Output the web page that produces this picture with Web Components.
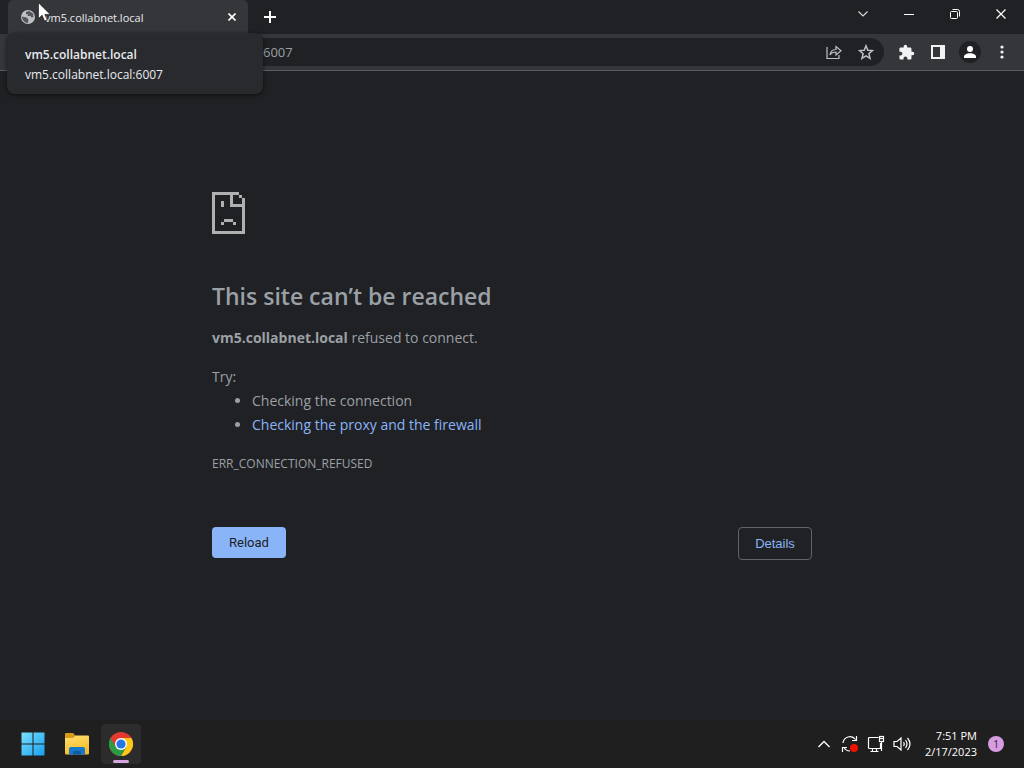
<!DOCTYPE html>
<html lang="en">
<head>
<meta charset="utf-8">
<meta name="viewport" content="width=device-width, initial-scale=1">
<title>vm5.collabnet.local</title>
<style>
  html, body { margin: 0; height: 100%; background: #202124; overflow: hidden; }
  body { font-family: "Open Sans", "Noto Sans", sans-serif; color: #9aa0a6; }
</style>
</head>
<body>
<remote-desktop>
  <tab-strip slot="browser"><browser-tab>vm5.collabnet.local</browser-tab></tab-strip>
  <browser-toolbar slot="browser"></browser-toolbar>
  <error-page slot="page">
    <span slot="title">This site can’t be reached</span>
    <span slot="host">vm5.collabnet.local</span>
    <span slot="code">ERR_CONNECTION_REFUSED</span>
  </error-page>
  <task-bar slot="taskbar"></task-bar>
  <tab-tooltip slot="overlay">
    <span slot="title">vm5.collabnet.local</span>
    <span slot="url">vm5.collabnet.local:6007</span>
  </tab-tooltip>
  <mouse-pointer slot="overlay"></mouse-pointer>
</remote-desktop>

<script>
const define = (name, html) => {
  const template = document.createElement('template');
  template.innerHTML = html;
  customElements.define(name, class extends HTMLElement {
    constructor() {
      super();
      this.attachShadow({ mode: 'open' }).append(template.content.cloneNode(true));
    }
  });
};

const buttonReset = `
  button { appearance: none; border: 0; padding: 0; margin: 0; background: none; color: inherit; font: inherit; display: grid; place-items: center; }
  svg { display: block; }
`;

define('remote-desktop', `
<style>
  :host { display: flex; flex-direction: column; min-height: 100vh; position: relative; }
  main { flex: 1; background: #202124; }
</style>
<header><slot name="browser"></slot></header>
<main><slot name="page"></slot></main>
<slot name="taskbar"></slot>
<slot name="overlay"></slot>
`);

define('tab-strip', `
<style>
  ${buttonReset}
  :host { display: flex; height: 34px; background: #202124; color: #fff; padding-left: 8px; }
  .new { width: 44px; }
  .controls { margin-left: auto; display: flex; height: 28px; }
  .controls button { width: 46px; }
</style>
<slot></slot>
<button class="new" aria-label="New tab"><svg width="12" height="12" viewBox="0 0 12 12"><path d="M6 0v12M0 6h12" stroke="#fff" stroke-width="2"/></svg></button>
<div class="controls">
  <button aria-label="Search tabs"><svg width="10" height="6" viewBox="0 0 10 6"><path d="M.5.5 5 5 9.500.5" fill="none" stroke="#ddd" stroke-width="1.100"/></svg></button>
  <button aria-label="Minimize"><svg width="10" height="10" viewBox="0 0 10 10"><path d="M0 5.500h10" stroke="#fff"/></svg></button>
  <button aria-label="Restore"><svg width="10" height="10" viewBox="0 0 10 10" fill="none" stroke="#fff"><rect x=".5" y="2.500" width="7" height="7" rx="1"/><path d="M2.500.5h5a2 2 0 0 1 2 2v5"/></svg></button>
  <button aria-label="Close"><svg width="10" height="10" viewBox="0 0 10 10"><path d="m.5.5 9 9m0-9-9 9" stroke="#fff" stroke-width="1.200"/></svg></button>
</div>
`);

define('browser-tab', `
<style>
  ${buttonReset}
  :host { display: flex; align-items: center; box-sizing: border-box; width: 240px; height: 34px; padding: 0 8px 0 12px; background: #35363a; border-radius: 5px 5px 0 0; color: #e8eaed; font-size: 11px; }
  .title { flex: 1; padding-left: 9px; white-space: nowrap; }
  button { width: 16px; height: 16px; }
</style>
<svg width="16" height="16" viewBox="0 0 16 16"><circle cx="8" cy="8" r="7" fill="#bdc1c6"/><path d="M2 7.500 6.500 8.500 8.500 10.500 8 14C4.500 14 2 11 2 7.500ZM6 3 9 2 13 4.500 13.500 8 11.500 8.500 10.500 7 7.500 7 8 5.500 6 5Z" fill="#54565a"/></svg>
<span class="title"><slot></slot></span>
<button aria-label="Close tab"><svg width="8" height="8" viewBox="0 0 8 8"><path d="m.5.5 7 7m0-7-7 7" stroke="#fff" stroke-width="1.600"/></svg></button>
`);

define('browser-toolbar', `
<style>
  ${buttonReset}
  :host { display: flex; align-items: center; height: 36px; background: #35363a; border-bottom: 1px solid #5b5c5f; padding: 0 6px 0 112px; color: #fff; }
  .box { flex: 1; display: flex; align-items: center; height: 28px; border-radius: 14px; background: #202124; padding: 0 2px 0 151px; margin-right: 6px; }
  input { flex: 1; min-width: 0; border: 0; outline: 0; padding: 0; background: none; color: #9aa0a6; font: 13px "Open Sans", sans-serif; height: 24px; }
  .box button, .tool { width: 32px; height: 28px; }
  .avatar { width: 22px; height: 22px; border-radius: 11px; background: #202124; display: grid; place-items: center; }
</style>
<div class="box">
  <input type="text" value="6007" aria-label="Address and search bar" spellcheck="false">
  <button aria-label="Share this page"><svg width="16" height="16" viewBox="0 0 16 16" fill="none" stroke="#bdc1c6" stroke-width="1.200"><path d="M1 3v11.500h12V11M4 11C4.500 7 6.500 5.500 10 5.500V2.500L15 6.800 10 11V8C7.500 8 5.500 8.500 4 11Z"/></svg></button>
  <button aria-label="Bookmark this tab"><svg width="16" height="16" viewBox="0 0 16 16"><path d="m8 1.800 1.800 4.400 4.700.4-3.600 3.100 1.100 4.600L8 11.800l-4 2.500 1.100-4.600L1.500 6.600l4.700-.4Z" fill="none" stroke="#bdc1c6" stroke-width="1.500"/></svg></button>
</div>
<button class="tool" aria-label="Extensions"><svg width="17" height="17" viewBox="0 0 24 24"><path fill="#f1f3f4" d="M20.500 11H19V7c0-1.100-.9-2-2-2h-4V3.500a2.500 2.500 0 0 0-5 0V5H4c-1.100 0-2 .9-2 2v3.800h1.500a2.700 2.700 0 0 1 0 5.400H2V20c0 1.100.9 2 2 2h3.800v-1.500a2.700 2.700 0 0 1 5.400 0V22H17c1.100 0 2-.9 2-2v-4h1.500a2.500 2.500 0 0 0 0-5Z"/></svg></button>
<button class="tool" aria-label="Side panel"><svg width="14" height="14" viewBox="0 0 14 14"><path fill="#f1f3f4" fill-rule="evenodd" d="M0 0h14v14H0ZM2 2v10h7V2Z"/></svg></button>
<button class="tool" aria-label="Profile"><span class="avatar"><svg width="14" height="14" viewBox="0 0 14 14" fill="#fff"><circle cx="7" cy="4" r="3"/><path d="M1 13v-1.500C1 9.500 4 8.200 7 8.200s6 1.300 6 3.300V13Z"/></svg></span></button>
<button class="tool" aria-label="Menu"><svg width="4" height="14" viewBox="0 0 4 14" fill="#f1f3f4"><circle cx="2" cy="2" r="1.600"/><circle cx="2" cy="7" r="1.600"/><circle cx="2" cy="12" r="1.600"/></svg></button>
`);

define('tab-tooltip', `
<style>
  :host { position: absolute; left: 7px; top: 33px; box-sizing: border-box; width: 256px; height: 61px; padding: 12px 18px 9px; background: #292a2d; border-radius: 8px; box-shadow: 0 1px 4px #0009; color: #e8eaed; font-size: 12px; line-height: 20px; }
  .title { font-weight: 600; }
</style>
<div class="title"><slot name="title"></slot></div>
<div><slot name="url"></slot></div>
`);

define('mouse-pointer', `
<style>
  :host { position: absolute; left: 38px; top: 2px; }
  svg { display: block; }
</style>
<svg width="13" height="20" viewBox="0 0 13 20"><path d="M.5.8V16.500l3.600-3.300 2.500 5.800 2.600-1.100L6.800 12.400h5.400Z" fill="#fff" stroke="#111" stroke-width=".6"/></svg>
`);

define('error-page', `
<style>
  :host { display: block; box-sizing: border-box; max-width: 600px; margin: 0 auto; padding-top: 121px; font-size: 14px; line-height: 24px; }
  svg { display: block; }
  h1 { margin: 47px 0 15px; font-size: 23px; line-height: 30px; font-weight: 600; }
  p { margin: 0; }
  strong { font-weight: 700; }
  .try { margin-top: 15px; }
  ul { margin: 0; padding-left: 40px; }
  a { color: #8ab4f8; text-decoration: none; }
  .code { margin-top: 15px; font-size: 12px; }
  .actions { display: flex; justify-content: space-between; align-items: flex-start; margin-top: 51px; }
  button { box-sizing: border-box; width: 74px; height: 31px; padding: 0; border: 0; border-radius: 4px; background: #8ab4f8; color: #202124; font: 13px Roboto, sans-serif; }
  .details { height: 33px; border: 1px solid #5f6368; background: none; color: #8ab4f8; font-family: "Liberation Sans", sans-serif; }
</style>
<svg width="33" height="42" viewBox="0 0 11 14" shape-rendering="crispEdges" fill="#b0b0b0" role="img" aria-label="Error"><path d="M0 0h9v1H7v3h3V3h1v11H0ZM1 1v12h9V5H6V1ZM9 1h1v1H9ZM10 2h1v1h-1ZM3 3h1v2H3ZM4 9h3v1H4ZM3 10h1v1H3ZM7 10h1v1H7Z" fill-rule="evenodd"/></svg>
<h1><slot name="title"></slot></h1>
<p><strong><slot name="host"></slot></strong> refused to connect.</p>
<p class="try">Try:</p>
<ul>
  <li>Checking the connection</li>
  <li><a href="#buttons">Checking the proxy and the firewall</a></li>
</ul>
<p class="code"><slot name="code"></slot></p>
<div class="actions" id="buttons"><button>Reload</button><button class="details">Details</button></div>
`);

define('task-bar', `
<style>
  ${buttonReset}
  :host { display: flex; align-items: center; justify-content: space-between; height: 48px; background: #1f1f1f; color: #fff; padding: 0 20px 0 11px; }
  .apps, .tray { display: flex; align-items: center; }
  .apps button { width: 44px; height: 40px; }
  .apps .active { width: 40px; height: 40px; margin-left: 2px; background: #2c2c2d; border-radius: 4px; position: relative; }
  .active::after { content: ""; position: absolute; left: 12px; bottom: 1px; width: 16px; height: 3px; border-radius: 2px; background: #d6a5df; }
  .tray button { width: 26px; height: 32px; }
  .clock { text-align: right; font-size: 11px; line-height: 16px; margin: 0 11px 0 10px; }
  .tray .badge { width: 16px; height: 16px; border-radius: 8px; background: #d69be0; color: #222; font-size: 10px; line-height: 16px; }
</style>
<div class="apps">
  <button aria-label="Start"><svg width="24" height="24" viewBox="0 0 24 24"><defs><linearGradient id="w" x2="1" y2="1"><stop stop-color="#7be0fc"/><stop offset="1" stop-color="#169ff0"/></linearGradient></defs><path fill="url(#w)" d="M.5.5h11v11H.5ZM12.500.5h11v11h-11ZM.5 12.500h11v11H.5ZM12.500 12.500h11v11h-11Z"/></svg></button>
  <button aria-label="File Explorer"><svg width="26" height="24" viewBox="0 0 26 24"><defs><linearGradient id="f" y2="1" x2=".3"><stop stop-color="#ffe06e"/><stop offset="1" stop-color="#f6bd2b"/></linearGradient></defs><path d="M1 2q0-1 1-1h7l2 2-2 4H1Z" fill="#d89b18"/><path d="M1 6h8l2-2.500h13q1 0 1 1V21q0 1.500-1 1.500H2Q1 22.500 1 21Z" fill="url(#f)"/><path d="M5 22.500V17q0-2 2-2h12q2 0 2 2v5.500Z" fill="#1679c9"/><path d="M9 22.500V20q0-1 1-1h6q1 0 1 1v2.500Z" fill="#0d5ca4"/></svg></button>
  <button class="active" aria-label="Google Chrome"><svg width="24" height="24" viewBox="0 0 24 24"><circle cx="12" cy="12" r="12" fill="#e5392f"/><path d="M12 6h10.400A12 12 0 0 1 12 24l5.200-9Z" fill="#fbc916"/><path d="M1.600 6A12 12 0 0 0 12 24l5.200-9H6.800Z" fill="#2c9b45"/><circle cx="12" cy="12" r="6" fill="#fff"/><circle cx="12" cy="12" r="4.600" fill="#2676e5"/></svg></button>
</div>
<div class="tray">
  <button aria-label="Show hidden icons"><svg width="12" height="8" viewBox="0 0 12 8"><path d="m.5 7 5.500-5.500L11.500 7" fill="none" stroke="#fff" stroke-width="1.300"/></svg></button>
  <button aria-label="Windows Update"><svg width="18" height="18" viewBox="0 0 18 18" fill="none" stroke="#fff" stroke-width="1.200"><path d="M2 8a7 7 0 0 1 12.500-3.500M15.500 1v4.500H11M9 16a7 7 0 0 1-6-3.500M1.500 17v-4.500H6"/><circle cx="13" cy="13" r="4" fill="#f01000" stroke="none"/></svg></button>
  <button aria-label="Network"><svg width="18" height="18" viewBox="0 0 18 18" fill="none" stroke="#fff" stroke-width="1.200"><path d="M11.500 2.500h-9q-1 0-1 1v9q0 1 1 1h11V8M5.500 13.500v3M9.500 13.500v3M3.500 16.500h8M14.500 6.500v9.500"/><rect x="12.500" y="1.500" width="4" height="5"/><path d="M13 3.500h3"/></svg></button>
  <button aria-label="Volume"><svg width="18" height="16" viewBox="0 0 18 16" fill="none" stroke="#fff" stroke-width="1.200"><path d="M1 5.500h3L8 2v12l-4-3.500H1ZM10.500 6q1.500 2 0 4M12.500 4q3 4 0 8M14.500 2q5 6 0 12"/></svg></button>
  <div class="clock"><div>7:51 PM</div><div>2/17/2023</div></div>
  <button class="badge" aria-label="1 new notification">1</button>
</div>
`);
</script>
</body>
</html>
